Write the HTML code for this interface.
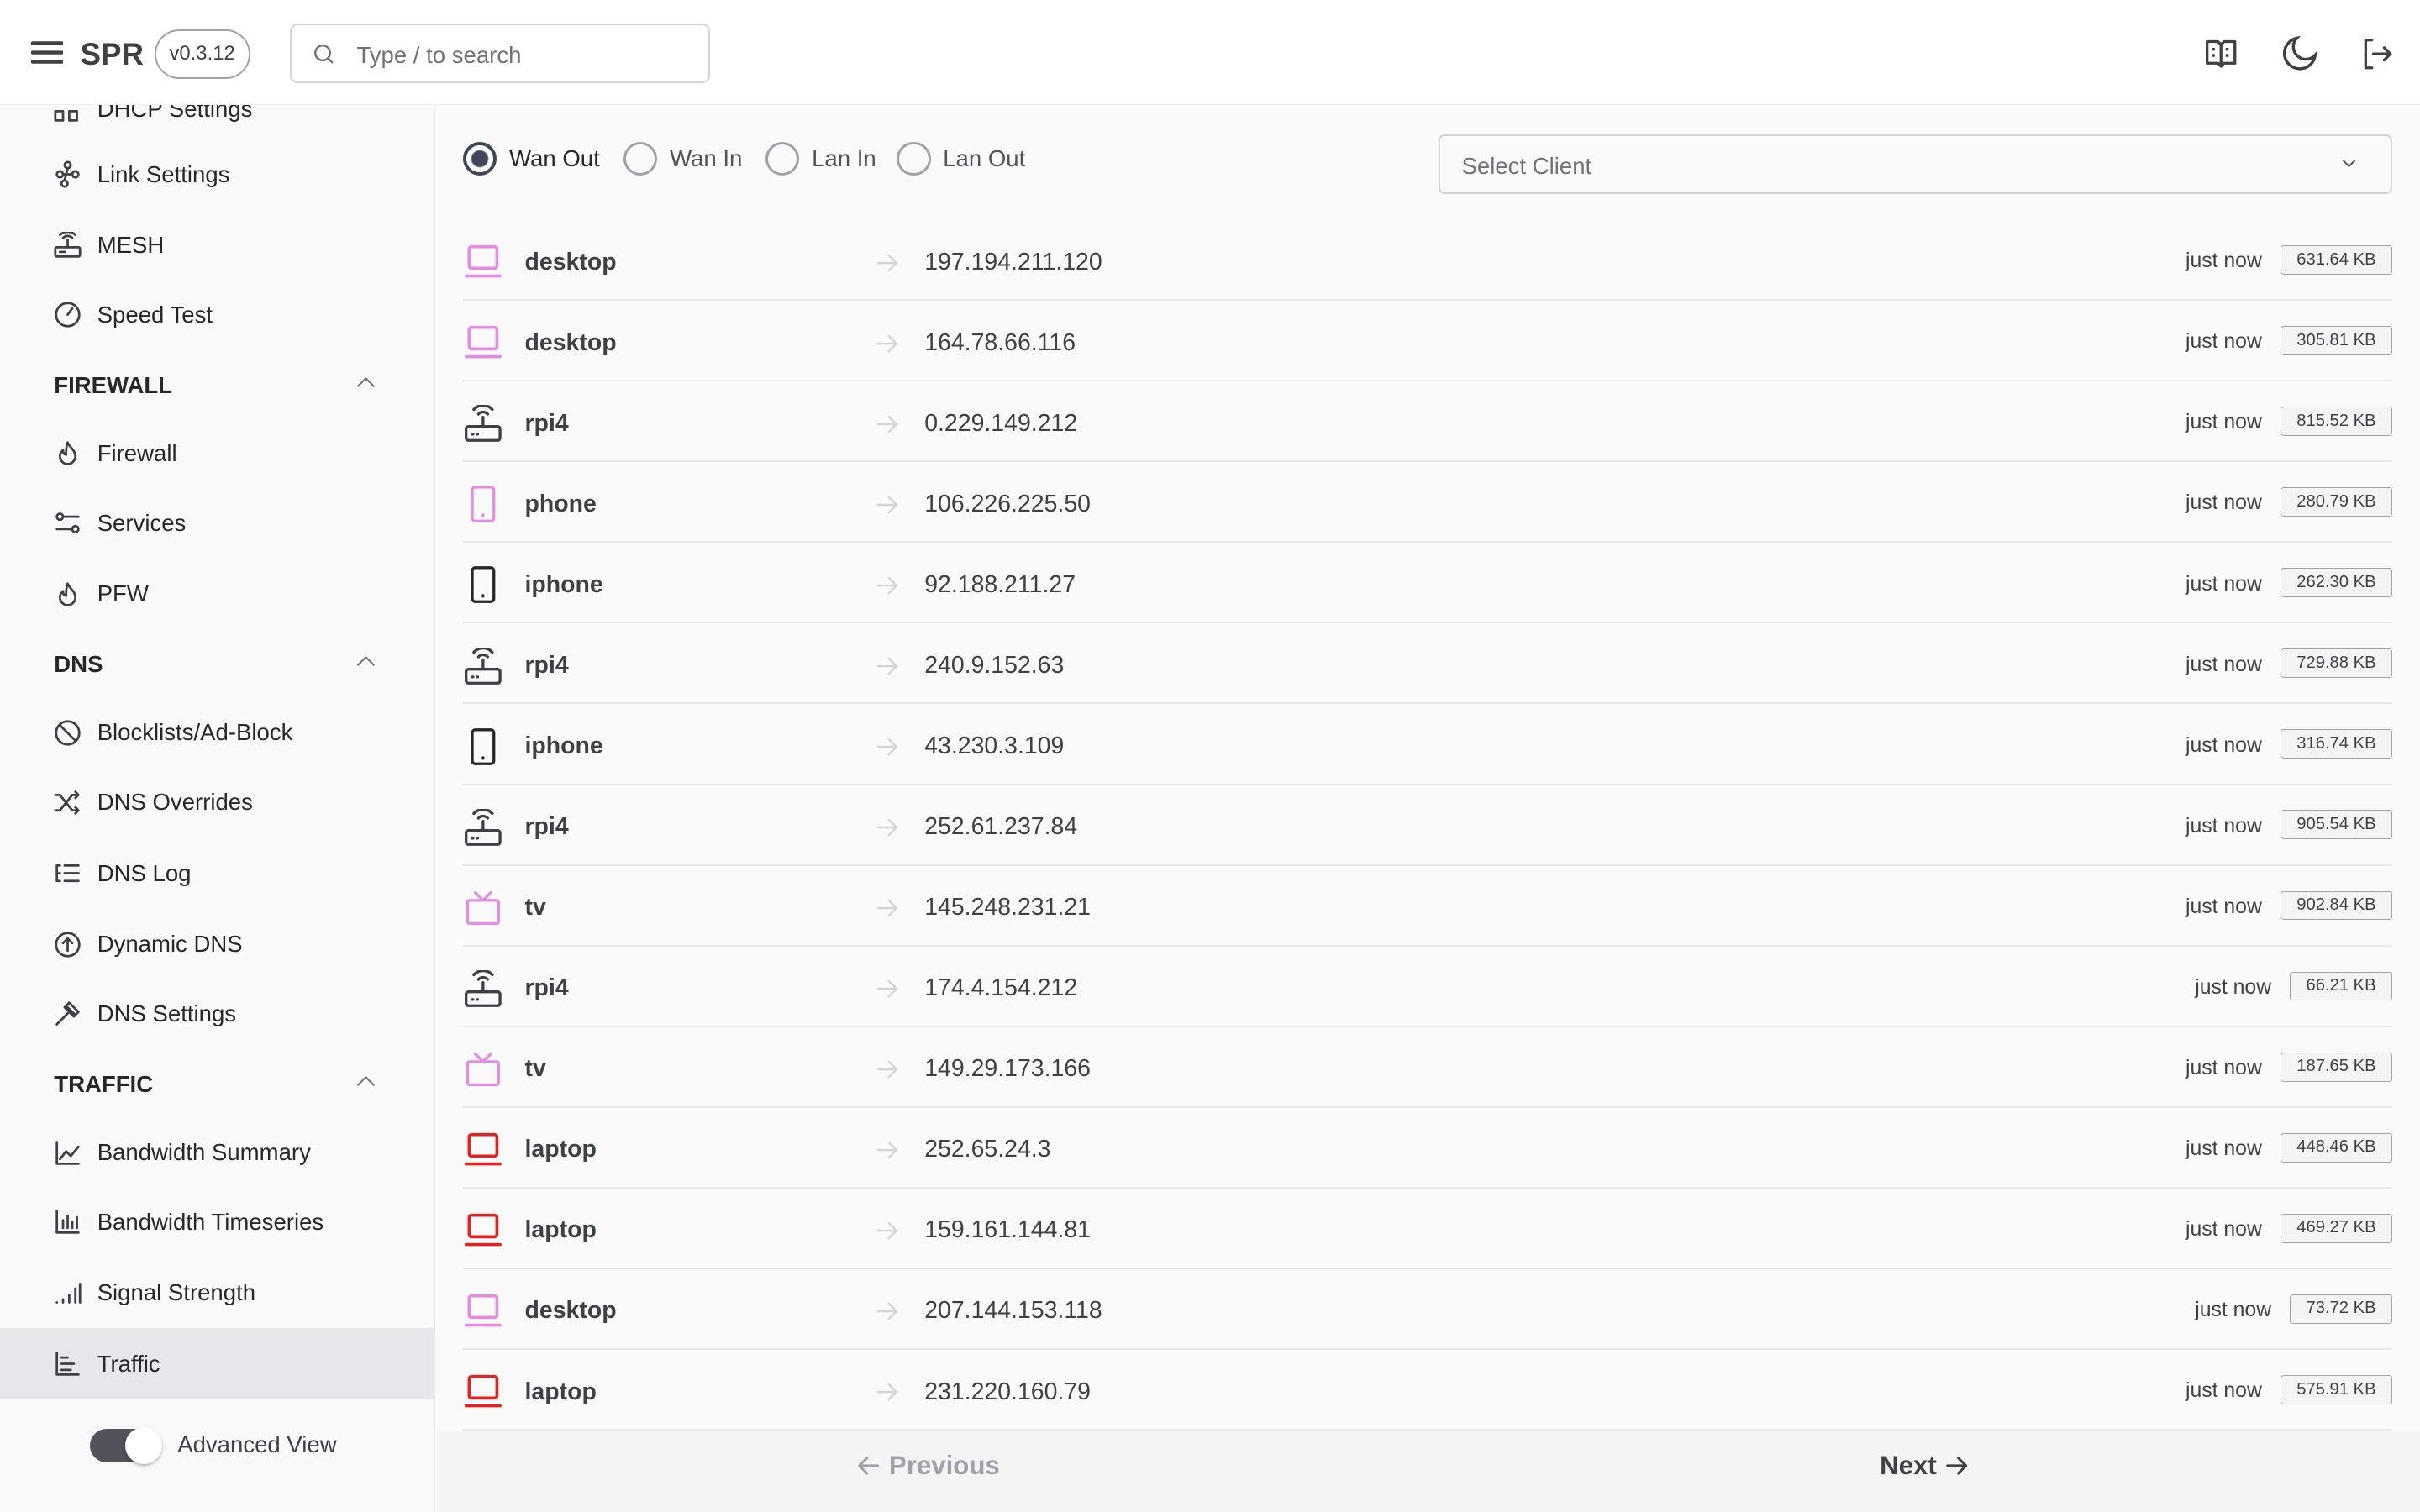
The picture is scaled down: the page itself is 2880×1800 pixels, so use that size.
<!DOCTYPE html>
<html><head><meta charset="utf-8"><style>
*{box-sizing:border-box;margin:0;padding:0}
html,body{width:2880px;height:1800px;overflow:hidden;background:#fafafa}
#w{width:1568px;height:980px;zoom:1.836735;position:relative;font-family:"Liberation Sans",sans-serif;color:#27272a;overflow:hidden;background:#fafafa}
.a{position:absolute}
.hdr{left:0;top:0;width:1568px;height:68px;background:#fff;border-bottom:1px solid #f0f0f0;z-index:5}
.side{left:0;top:68px;width:282px;height:912px;background:#f8f9fb;border-right:1px solid #eee}
.si{position:absolute;left:35px;font-size:15px;color:#27272a;display:flex;align-items:center;gap:10px;height:20px}
.si svg{width:18px;height:18px;stroke:#3f3f46;fill:none;stroke-width:1.5;stroke-linecap:round;stroke-linejoin:round}
.sh{position:absolute;left:35px;font-size:15px;font-weight:bold;color:#27272a;width:210px}
.sh:after{content:"";position:absolute;right:4px;top:5px;width:7px;height:7px;border-left:1.5px solid #71717a;border-top:1.5px solid #71717a;transform:rotate(45deg)}
.row{position:absolute;left:300px;width:1250px;height:52px;border-bottom:1.5px solid #e8e8e8}
.row .ic{position:absolute;left:0;top:15px;width:26px;height:24px}
.row .nm{position:absolute;left:40px;top:18px;font-size:15.5px;font-weight:bold;color:#3f3f46}
.row .ar{position:absolute;left:268px;top:19px}
.row .ip{position:absolute;left:299px;top:18px;font-size:15.5px;color:#3f3f46}
.row .rt{position:absolute;right:0;top:16px;display:flex;align-items:center;gap:12px}
.row .tm{font-size:13.5px;color:#3f3f46;margin-top:2px}
.row .kb{font-size:11px;color:#3f3f46;border:1px solid #a1a1aa;border-radius:2px;background:#f4f4f5;padding:2px 10px;height:19px;line-height:14px}
.rad{position:absolute;top:92px;font-size:15px;color:#52525b;display:flex;align-items:center;gap:8px}
.rad i{display:inline-block;width:22px;height:22px;border:2px solid #a1a1aa;border-radius:50%}
</style></head><body><div id="w">
<div class="a hdr">
 <svg class="a" style="left:20px;top:25px" width="21" height="18" viewBox="0 0 21 18"><path d="M1 3h19M1 9h19M1 15h19" stroke="#3f3f46" stroke-width="2.4" stroke-linecap="round"/></svg>
 <div class="a" style="left:52px;top:24px;font-size:20px;font-weight:bold;color:#3f3f46">SPR</div>
 <div class="a" style="left:100px;top:19px;width:62px;height:32px;border:1.5px solid #a1a1aa;border-radius:16px;font-size:13px;text-align:center;line-height:29px;color:#3f3f46">v0.3.12</div>
 <div class="a" style="left:188px;top:15px;width:272px;height:39px;border:1.5px solid #d4d4d8;border-radius:5px;background:#fff">
  <svg class="a" style="left:14px;top:12px" width="14" height="14" viewBox="0 0 14 14"><circle cx="6" cy="6" r="4.8" fill="none" stroke="#71717a" stroke-width="1.3"/><path d="M9.5 9.5l3 3" stroke="#71717a" stroke-width="1.3"/></svg>
  <div class="a" style="left:42px;top:11px;font-size:15px;color:#71717a">Type / to search</div>
 </div>
 <svg class="a" style="left:1428px;top:24px" width="22" height="22" viewBox="0 0 22 22" fill="none" stroke="#3f3f46" stroke-width="1.8" stroke-linejoin="round"><path d="M2 3h7l2 2 2-2h7v14h-7l-2 2-2-2H2z"/><path d="M11 5v13M5 8h2M5 12h2M14 8h2M14 12h2"/></svg>
 <svg class="a" style="left:1477px;top:22px" width="26" height="26" viewBox="0 0 26 26" fill="none" stroke="#3f3f46" stroke-width="1.9" stroke-linecap="round"><path d="M11 3a10 10 0 1 0 12 11 8 8 0 0 1-12-11z"/></svg>
 <svg class="a" style="left:1529px;top:24px" width="22" height="22" viewBox="0 0 22 22" fill="none" stroke="#3f3f46" stroke-width="1.8" stroke-linecap="round" stroke-linejoin="round"><path d="M8 2H4v18h4M9 11h11M16 7l4 4-4 4"/></svg>
</div>
<div class="a side">
 <div class="si" style="top:-7px"><svg viewBox="0 0 18 18"><rect x="1" y="10" width="5" height="6"/><rect x="10" y="10" width="5" height="6"/></svg>DHCP Settings</div>
 <div class="si" style="top:35px"><svg viewBox="0 0 18 18"><circle cx="9" cy="3" r="2"/><circle cx="4" cy="9" r="2"/><circle cx="14" cy="9" r="2"/><circle cx="7" cy="15" r="2"/><path d="M6 9h6M9 5l-2 8"/></svg>Link Settings</div>
 <div class="si" style="top:81px"><svg viewBox="0 0 18 18"><rect x="1" y="10" width="16" height="6" rx="1"/><path d="M9 10V5M6 4a4 4 0 0 1 6 0M4 2a7 7 0 0 1 10 0M4 13h1M6 13h1"/></svg>MESH</div>
 <div class="si" style="top:126px"><svg viewBox="0 0 18 18"><circle cx="9" cy="9" r="7.5"/><path d="M9 9l3-4"/></svg>Speed Test</div>
 <div class="sh" style="top:173px">FIREWALL</div>
 <div class="si" style="top:216px"><svg viewBox="0 0 18 18"><path d="M9 2c1 3 5 5 5 9a5 5 0 0 1-10 0c0-2 1-3 2-4 0 2 1 3 2 3 0-3 0-5 1-8z"/></svg>Firewall</div>
 <div class="si" style="top:261px"><svg viewBox="0 0 18 18"><circle cx="4" cy="5" r="2"/><circle cx="14" cy="13" r="2"/><path d="M7 5h9M2 13h9"/></svg>Services</div>
 <div class="si" style="top:307px"><svg viewBox="0 0 18 18"><path d="M9 2c1 3 5 5 5 9a5 5 0 0 1-10 0c0-2 1-3 2-4 0 2 1 3 2 3 0-3 0-5 1-8z"/></svg>PFW</div>
 <div class="sh" style="top:354px">DNS</div>
 <div class="si" style="top:397px"><svg viewBox="0 0 18 18"><circle cx="9" cy="9" r="7.5"/><path d="M4 4l10 10"/></svg>Blocklists/Ad-Block</div>
 <div class="si" style="top:442px"><svg viewBox="0 0 18 18"><path d="M1 4h3l8 10h4M1 14h3l8-10h4M14 2l2 2-2 2M14 12l2 2-2 2"/></svg>DNS Overrides</div>
 <div class="si" style="top:488px"><svg viewBox="0 0 18 18"><path d="M2 4v10M7 4h9M7 9h9M7 14h9M2 9h2M2 14h2M2 4h2"/></svg>DNS Log</div>
 <div class="si" style="top:534px"><svg viewBox="0 0 18 18"><circle cx="9" cy="9" r="7.5"/><path d="M9 13V5M6 8l3-3 3 3"/></svg>Dynamic DNS</div>
 <div class="si" style="top:579px"><svg viewBox="0 0 18 18"><path d="M2 16l7-7M8 4l6 6M10 2l6 6-3 3-6-6z"/></svg>DNS Settings</div>
 <div class="sh" style="top:626px">TRAFFIC</div>
 <div class="si" style="top:669px"><svg viewBox="0 0 18 18"><path d="M2 2v14h14M4 13l4-5 3 3 5-6"/></svg>Bandwidth Summary</div>
 <div class="si" style="top:714px"><svg viewBox="0 0 18 18"><path d="M2 2v14h14M6 13V8M9 13V5M12 13V9M15 13V6"/></svg>Bandwidth Timeseries</div>
 <div class="si" style="top:760px"><svg viewBox="0 0 18 18"><path d="M2 15v0M6 13v2M10 10v5M14 6v9M17 3v12"/></svg>Signal Strength</div>
 <div class="a" style="left:0;top:793px;width:282px;height:46px;background:#e5e7eb"></div>
 <div class="si" style="top:806px"><svg viewBox="0 0 18 18"><path d="M2 2v14h14M5 5h4M5 9h8M5 13h6"/></svg>Traffic</div>
 <div class="a" style="left:58px;top:858px;width:46px;height:22px;border-radius:11px;background:#52525b"></div>
 <div class="a" style="left:81px;top:857px;width:24px;height:24px;border-radius:50%;background:#fff;box-shadow:0 1px 2px rgba(0,0,0,.3)"></div>
 <div class="a" style="left:115px;top:860px;font-size:15px;color:#3f3f46">Advanced View</div>
</div>
<div class="rad" style="left:300px;color:#27272a"><i style="border:2.5px solid #3f4758;background:radial-gradient(circle,#3f4758 5px,#fff 6px)"></i>Wan Out</div>
<div class="rad" style="left:404px"><i></i>Wan In</div>
<div class="rad" style="left:496px"><i></i>Lan In</div>
<div class="rad" style="left:581px"><i></i>Lan Out</div>
<div class="a" style="left:932px;top:87px;width:618px;height:39px;border:1.5px solid #d4d4d8;border-radius:4px;background:#fafafa">
 <div class="a" style="left:14px;top:11px;font-size:15px;color:#71717a">Select Client</div>
 <div class="a" style="right:24px;top:13px;width:6px;height:6px;border-right:1.3px solid #52525b;border-bottom:1.3px solid #52525b;transform:rotate(45deg)"></div>
</div>
<div id="rows"></div>
<div class="a" style="left:283px;top:928px;width:1285px;height:52px;background:#f4f4f5"></div>
<div class="a" style="left:555px;top:940px;font-size:17px;font-weight:bold;color:#a1a1aa;display:flex;align-items:center;gap:5px"><svg width="16" height="14" viewBox="0 0 16 14" fill="none" stroke="#a1a1aa" stroke-width="1.6" stroke-linecap="round" stroke-linejoin="round"><path d="M14 7H2M7 2L2 7l5 5"/></svg>Previous</div>
<div class="a" style="left:1218px;top:940px;font-size:17px;font-weight:bold;color:#3f3f46;display:flex;align-items:center;gap:5px">Next<svg width="16" height="14" viewBox="0 0 16 14" fill="none" stroke="#3f3f46" stroke-width="1.6" stroke-linecap="round" stroke-linejoin="round"><path d="M2 7h12M9 2l5 5-5 5"/></svg></div>
</div>
<script>
var L='<svg viewBox="0 0 26 24" width="26" height="24" fill="none" stroke="C" stroke-width="2" stroke-linecap="round"><rect x="4" y="2" width="18" height="14" rx="1.5"/><path d="M2 21h22"/></svg>';
var T='<svg viewBox="0 0 26 24" width="26" height="24" fill="none" stroke="#e58be0" stroke-width="1.8" stroke-linecap="round" stroke-linejoin="round"><rect x="3" y="7" width="20" height="15" rx="1"/><path d="M8 2l5 5 5-5"/></svg>';
var R='<svg viewBox="0 0 26 24" width="26" height="24" fill="none" stroke="#3f3f46" stroke-width="1.8" stroke-linecap="round"><rect x="2" y="14" width="22" height="9" rx="1.5"/><path d="M13 14V8M10 6a4 4 0 0 1 6 0M7 3a8 8 0 0 1 12 0M6 19h.5M9 19h.5"/></svg>';
var P='<svg viewBox="0 0 26 24" width="26" height="24" fill="none" stroke="C" stroke-width="1.8" stroke-linecap="round"><rect x="6" y="1" width="14" height="22" rx="2"/><path d="M13 19v.5"/></svg>';
var A='<svg width="14" height="12" viewBox="0 0 14 12" fill="none" stroke="#d4d4d8" stroke-width="1.3" stroke-linecap="round" stroke-linejoin="round"><path d="M1 6h12M8 1l5 5-5 5"/></svg>';
var d=[[L.replace('C','#e58be0'),'desktop','197.194.211.120','631.64 KB'],[L.replace('C','#e58be0'),'desktop','164.78.66.116','305.81 KB'],[R,'rpi4','0.229.149.212','815.52 KB'],[P.replace('C','#e58be0'),'phone','106.226.225.50','280.79 KB'],[P.replace('C','#27272a'),'iphone','92.188.211.27','262.30 KB'],[R,'rpi4','240.9.152.63','729.88 KB'],[P.replace('C','#27272a'),'iphone','43.230.3.109','316.74 KB'],[R,'rpi4','252.61.237.84','905.54 KB'],[T,'tv','145.248.231.21','902.84 KB'],[R,'rpi4','174.4.154.212','66.21 KB'],[T,'tv','149.29.173.166','187.65 KB'],[L.replace('C','#dc2626'),'laptop','252.65.24.3','448.46 KB'],[L.replace('C','#dc2626'),'laptop','159.161.144.81','469.27 KB'],[L.replace('C','#e58be0'),'desktop','207.144.153.118','73.72 KB'],[L.replace('C','#dc2626'),'laptop','231.220.160.79','575.91 KB']];
var h='';d.forEach(function(r,i){h+='<div class="row" style="top:'+(143+i*52.3)+'px"><div class="ic">'+r[0]+'</div><div class="nm">'+r[1]+'</div><div class="ar">'+A+'</div><div class="ip">'+r[2]+'</div><div class="rt"><div class="tm">just now</div><div class="kb">'+r[3]+'</div></div></div>'});
document.getElementById('rows').innerHTML=h;
</script>
</body></html>
